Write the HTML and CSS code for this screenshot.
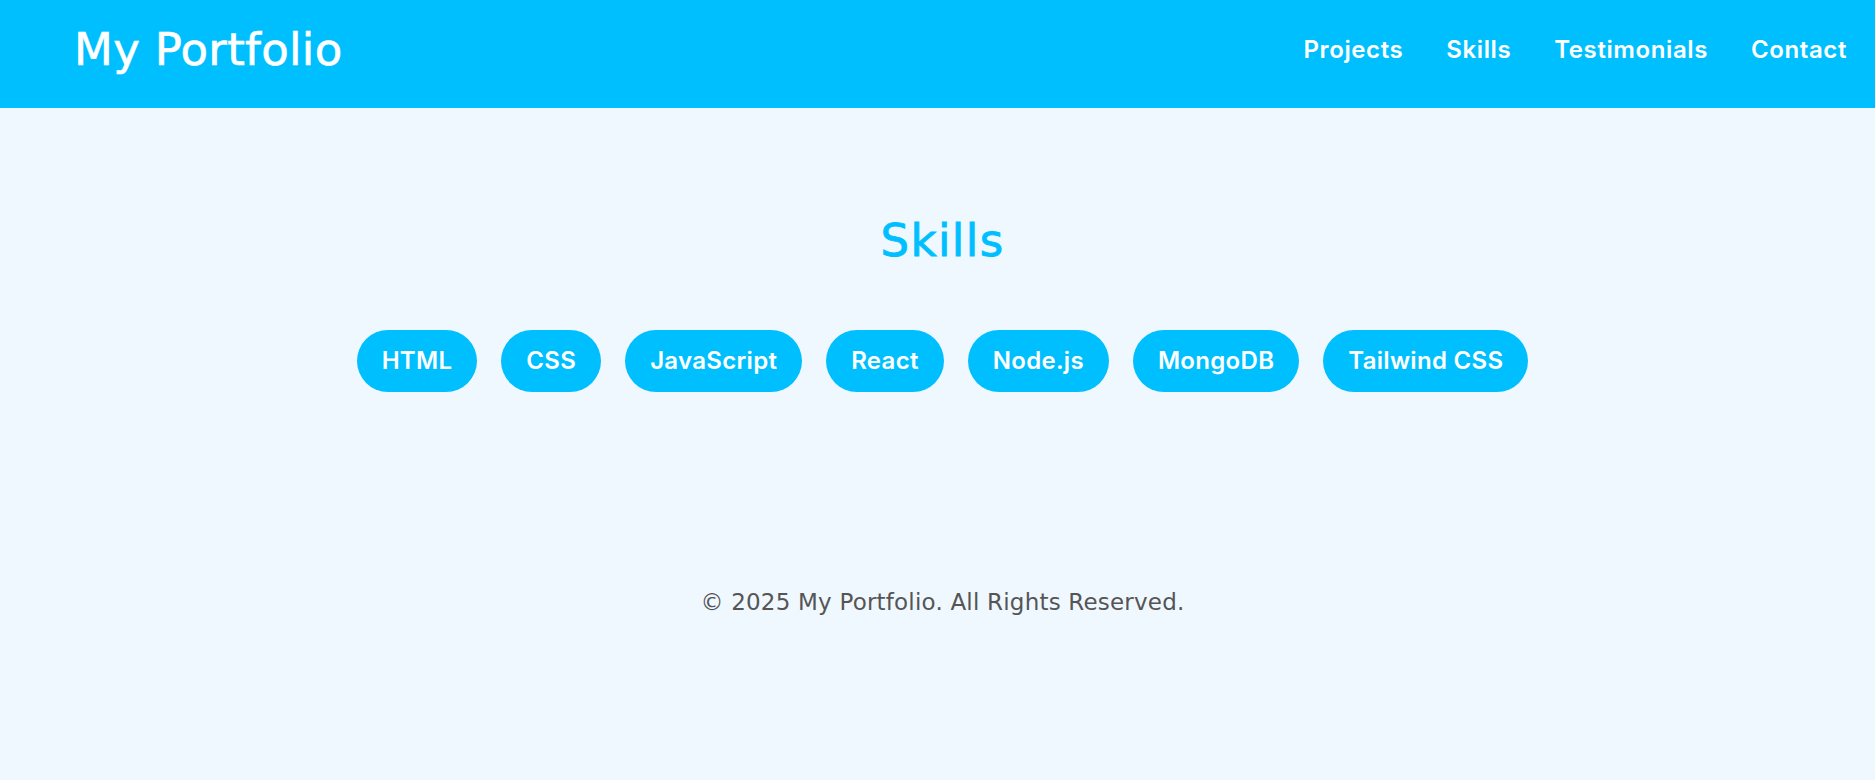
FILE: index.html
```html
<!DOCTYPE html>
<html lang="en">
<head>
<meta charset="utf-8">
<title>My Portfolio</title>
<link rel="stylesheet" href="styles.css">
</head>
<body>
<header class="site-header">
  <h1 class="brand">My Portfolio</h1>
  <nav class="nav">
    <a href="#projects">Projects</a>
    <a href="#skills">Skills</a>
    <a href="#testimonials">Testimonials</a>
    <a href="#contact">Contact</a>
  </nav>
</header>
<main>
  <section class="skills" id="skills">
    <h2 class="section-title">Skills</h2>
    <ul class="skill-list">
      <li class="skill">HTML</li>
      <li class="skill">CSS</li>
      <li class="skill">JavaScript</li>
      <li class="skill">React</li>
      <li class="skill">Node.js</li>
      <li class="skill">MongoDB</li>
      <li class="skill">Tailwind CSS</li>
    </ul>
  </section>
</main>
<footer class="site-footer">
  <p>&copy; 2025 My Portfolio. All Rights Reserved.</p>
</footer>
</body>
</html>
```
FILE: styles.css
```css
* { box-sizing: border-box; }

body {
  margin: 0;
  background: #F0F8FF;
  font-family: "DejaVu Sans", sans-serif;
  color: #555;
}

.site-header {
  height: 108px;
  background: #00BFFF;
  display: flex;
  align-items: center;
  justify-content: space-between;
  padding: 0 28px 8px 74px;
}

.brand {
  margin: 0;
  font-family: "DejaVu Sans", sans-serif;
  font-weight: 400;
  font-size: 45px;
  line-height: 54px;
  letter-spacing: 0.3px;
  -webkit-text-stroke: 0.6px #fff;
  color: #fff;
}

.nav {
  display: flex;
  gap: 43px;
}

.nav a {
  font-family: Inter, sans-serif;
  font-weight: 600;
  font-size: 24px;
  line-height: 30px;
  letter-spacing: 0.6px;
  color: #fff;
  text-decoration: none;
}

.skills {
  padding: 106px 0 0 10px;
  text-align: center;
}

.section-title {
  margin: 0;
  font-family: "DejaVu Sans", sans-serif;
  font-weight: 400;
  font-size: 45px;
  line-height: 54px;
  letter-spacing: 1.4px;
  -webkit-text-stroke: 0.9px #00BFFF;
  color: #00BFFF;
}

.skill-list {
  list-style: none;
  margin: 62px 0 0;
  padding: 0;
  display: flex;
  flex-wrap: wrap;
  justify-content: center;
  gap: 24px;
}

.skill {
  background: #00BFFF;
  color: #fff;
  font-family: Inter, sans-serif;
  font-weight: 600;
  font-size: 24px;
  line-height: 30px;
  letter-spacing: 0.3px;
  padding: 16px 25px;
  border-radius: 31px;
}

.site-footer {
  margin-top: 195px;
  padding-left: 10px;
  text-align: center;
}

.site-footer p {
  margin: 0;
  font-family: "DejaVu Sans", sans-serif;
  font-size: 23px;
  line-height: 30px;
  letter-spacing: 0.2px;
  color: #555;
}
```
